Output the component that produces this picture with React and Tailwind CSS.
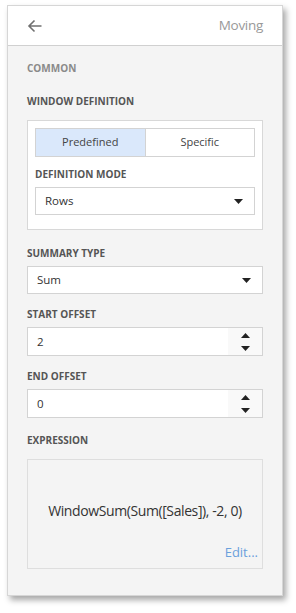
import React from 'react';

const Label = ({ children, className = '' }) => (
  <div className={`h-4 leading-4 text-[10px] font-bold uppercase ${className}`}>{children}</div>
);

const Caret = () => (
  <svg width="9" height="5" viewBox="0 0 9 5"><path d="M0 0h9L4.5 5z" fill="#222" /></svg>
);

const Spin = ({ value }) => (
  <div className="flex h-[29px] border border-[#d3d3d3] bg-white">
    <div className="flex-1 pl-[9px] flex items-center text-[11.5px] text-[#333]">{value}</div>
    <div className="w-[34px] bg-[#f9f9f9] flex flex-col items-center justify-center gap-[8px]">
      <svg width="9" height="5" viewBox="0 0 9 5"><path d="M0 5h9L4.5 0z" fill="#222" /></svg>
      <svg width="9" height="5" viewBox="0 0 9 5"><path d="M0 0h9L4.5 5z" fill="#222" /></svg>
    </div>
  </div>
);

const App = () => {
  return (
    <div className="w-[296px] h-[613px] bg-white pt-[5px] pl-[7px]" style={{ fontFamily: '"Open Sans", "Noto Sans", sans-serif' }}>
      <div className="w-[276px] h-[591px] bg-[#f4f4f4] border border-[#d6d6d6] shadow-[3px_4px_6px_rgba(0,0,0,0.35)] flex flex-col">
        <div className="h-[40px] bg-white border-b border-[#d0d0d0] flex items-center justify-between pl-[19px] pr-[19px]">
          <svg width="15" height="14" viewBox="0 0 15 14">
            <path d="M14.5 7H2M7.5 1.5L2 7l5.5 5.5" fill="none" stroke="#707070" strokeWidth="1.6" />
          </svg>
          <span className="text-[13.5px] tracking-[-0.3px] text-[#999]">Moving</span>
        </div>
        <div className="px-[19px] flex flex-col">
          <Label className="mt-[14px] text-[#8a8a8a]">Common</Label>
          <Label className="mt-[17px] text-[#555]">Window Definition</Label>
          <div className="mt-[11px] h-[110px] bg-white border border-[#d8d8d8] px-[7px] pt-[7px]">
            <div className="flex h-[29px] border border-[#d3d3d3] text-[11px] text-[#444]">
              <div className="flex-1 bg-[#dae8fb] flex items-center justify-center border-r border-[#d3d3d3]">Predefined</div>
              <div className="flex-1 bg-white flex items-center justify-center">Specific</div>
            </div>
            <Label className="mt-[9px] text-[#555]">Definition Mode</Label>
            <div className="mt-[5px] h-[28px] border border-[#d3d3d3] flex items-center justify-between pl-[9px] pr-[11px] text-[11.5px] text-[#333]">
              <span>Rows</span>
              <Caret />
            </div>
          </div>
          <Label className="mt-[15px] text-[#555]">Summary Type</Label>
          <div className="mt-[5px] h-[28px] bg-white border border-[#d3d3d3] flex items-center justify-between pl-[9px] pr-[11px] text-[11.5px] text-[#333]">
            <span>Sum</span>
            <Caret />
          </div>
          <Label className="mt-[12px] text-[#555]">Start Offset</Label>
          <div className="mt-[5px]"><Spin value="2" /></div>
          <Label className="mt-[12px] text-[#555]">End Offset</Label>
          <div className="mt-[5px]"><Spin value="0" /></div>
          <Label className="mt-[14px] text-[#555]">Expression</Label>
          <div className="mt-[11px] h-[110px] border border-[#dedede] flex flex-col">
            <div className="flex-1 flex items-end justify-center pb-[1px] text-[14px] tracking-[-0.4px] text-[#333] h-[63px]">WindowSum(Sum([Sales]), -2, 0)</div>
            <div className="h-[46px] flex items-end justify-end pr-[4px] pb-[6px] text-[13px] text-[#6aa0dc]">Edit...</div>
          </div>
        </div>
      </div>
    </div>
  );
};

export default App;
